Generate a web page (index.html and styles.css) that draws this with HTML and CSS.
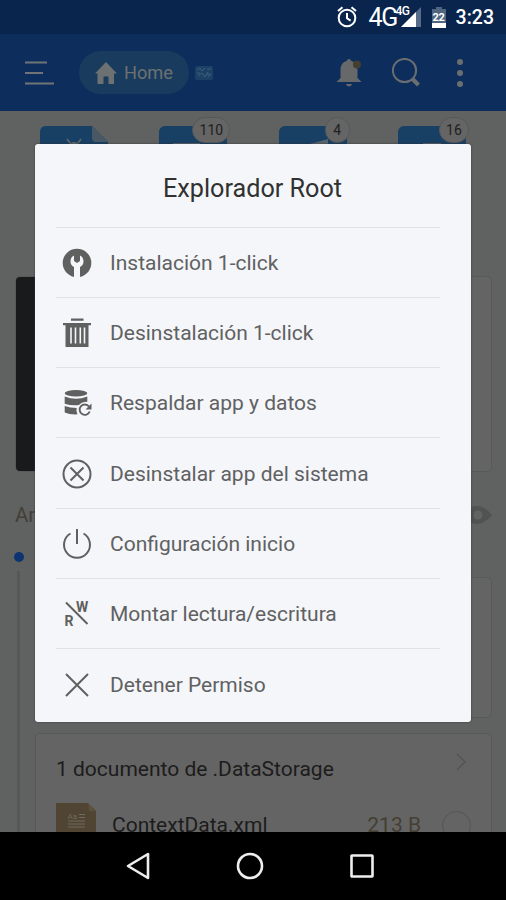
FILE: index.html
```html
<!DOCTYPE html>
<html lang="es">
<head>
<meta charset="utf-8">
<title>Explorador Root</title>
<link rel="stylesheet" href="styles.css">
</head>
<body>
<div class="screen">
  <div class="status">
    <svg class="alarm" width="20" height="22" viewBox="0 0 20 22" fill="none" stroke="#fff" stroke-width="2"><circle cx="10" cy="12" r="8.3"/><path d="M10 7v5.3l3.6 2.3M1 5l4.5-3.8M19 5l-4.500-3.800"/></svg>
    <span class="net">4G</span>
    <span class="signal"><span class="net-small">4G</span><svg width="20" height="20" viewBox="0 0 20 20"><path d="M20 0v20H0z" fill="#566b88"/><path d="M15 5v15H0z" fill="#fff"/></svg></span>
    <span class="battery"><svg width="14" height="21" viewBox="0 0 14 21"><path d="M4 0h6v2h4v19H0V2h4z" fill="#50657f"/><path d="M0 16h14v5H0z" fill="#fff"/></svg><b>22</b></span>
    <span class="clock">3:23</span>
  </div>
  <header class="toolbar">
    <svg class="menu" width="30" height="24" viewBox="0 0 30 24" stroke="#707477" stroke-width="2"><path d="M0 1.500h22M0 12h18M0 22.500h29"/></svg>
    <div class="home">
      <svg width="22" height="22" viewBox="0 0 22 22" fill="#6e7172"><path d="M11 0L22 11.500h-3V22h-5.500v-7.500h-5V22H2.500V11.500H0z"/></svg>
      <span>Home</span>
    </div>
    <svg class="chip" width="18" height="14" viewBox="0 0 18 14"><rect width="18" height="14" rx="2" fill="#1b4166"/><path d="M2 4l3-2 2 3 3-3M3 10l4-3 3 4 3-5M12 3h4M13 11l3-3M2 7h3M12 8h3" stroke="#3f6075" fill="none"/></svg>
    <svg class="bell" width="26" height="28" viewBox="0 0 26 28"><path d="M13 0c1.500 0 2 1 2.200 2C20 3.200 21.500 7 21.500 11v8l4 4H.5l4-4v-8c0-4 1.500-7.800 6.300-9C11 1 11.500 0 13 0zM10 25h6c-.3 3.200-5.700 3.200-6 0z" fill="#666869"/><circle cx="21" cy="5.500" r="4" fill="#453f2f"/></svg>
    <svg class="search" width="28" height="29" viewBox="0 0 28 29" fill="none" stroke="#6b6e70"><circle cx="12.500" cy="12.500" r="11.600" stroke-width="2"/><path d="M20.500 21l6 6" stroke-width="4"/></svg>
    <svg class="more" width="6" height="28" viewBox="0 0 6 28" fill="#6b6e70"><circle cx="3" cy="3" r="3"/><circle cx="3" cy="14" r="3"/><circle cx="3" cy="25" r="3"/></svg>
  </header>
  <main class="content">
    <div class="tiles">
      <div class="tile"><svg width="68" height="40" viewBox="0 0 68 40"><path d="M6 0h46l16 16v24H0V6q0-6 6-6z" fill="#183f64"/><path d="M52 0l16 16H56q-4 0-4-4z" fill="#485965"/><path d="M27 13l3 4M41 13l-3 4" stroke="#626a6d" stroke-width="1.500"/><path d="M27 20q7-8 14 0z" fill="#626a6d"/></svg></div>
      <div class="tile"><svg width="68" height="40" viewBox="0 0 68 40"><rect width="68" height="45" rx="6" fill="#183f64"/><path d="M14 17h27v5H14z" fill="#58656c"/></svg><span class="badge wide">110</span></div>
      <div class="tile"><svg width="68" height="40" viewBox="0 0 68 40"><rect width="68" height="45" rx="6" fill="#183f64"/><path d="M31 18l18-5v8H31z" fill="#58656c"/></svg><span class="badge">4</span></div>
      <div class="tile"><svg width="68" height="40" viewBox="0 0 68 40"><rect width="68" height="45" rx="6" fill="#183f64"/><path d="M25 17h18v5H25z" fill="#58656c"/></svg><span class="badge mid">16</span></div>
    </div>
    <div class="card banner"><div class="banner-art"></div></div>
    <div class="section"><span>Archivos recientes</span>
      <svg width="30" height="18" viewBox="0 0 30 18"><path d="M0 9Q15-9 30 9 15 27 0 9z" fill="#515353"/><circle cx="16" cy="9" r="4.500" fill="#606362"/></svg>
    </div>
    <div class="timeline">
      <div class="rail"><i class="dot"></i><i class="line"></i></div>
      <div class="entries">
        <div class="card entry"></div>
        <div class="card doc">
          <div class="doc-head"><span>1 documento de .DataStorage</span><svg width="10" height="18" viewBox="0 0 10 18" fill="none" stroke="#515454" stroke-width="1.400"><path d="M1 1l8 8-8 8"/></svg></div>
          <div class="doc-row">
            <svg width="40" height="44" viewBox="0 0 40 44"><path d="M0 0h32l8 8v36H0z" fill="#4f4532"/><path d="M32 0l8 8h-7z" fill="#5d523b"/><path d="M23 11.500h6M23 14.500h6M12 18h17M12 21h17M12 24h17" stroke="#716a5e" stroke-width="1"/><text x="11.500" y="16" class="aa">Aa</text><text x="13" y="34" class="aa">XML</text></svg>
            <span class="file">ContextData.xml</span><span class="size">213 B</span><i class="radio"></i>
          </div>
        </div>
      </div>
    </div>
  </main>
  <nav class="nav">
    <svg width="24" height="28" viewBox="0 0 24 28"><path d="M22 2v24L2 14z"/></svg>
    <svg width="28" height="28" viewBox="0 0 28 28"><circle cx="14" cy="14" r="12"/></svg>
    <svg width="24" height="24" viewBox="0 0 24 24"><rect x="1.500" y="1.500" width="21" height="21" rx=".5"/></svg>
  </nav>
  <section class="dialog">
    <h1>Explorador Root</h1>
    <ul>
      <li><svg viewBox="0 0 30 30"><circle cx="15" cy="15" r="14.300" fill="#5f6060"/><path d="M12 7.500v5.500l3 2 3-2V7.500q3.500 1.500 3.500 6 0 3.500-3.500 5.500V30h-6V19q-3.500-2-3.500-5.500 0-4.500 3.500-6z" fill="#f5f6f9"/></svg><span>Instalación 1-click</span></li>
      <li><svg viewBox="0 0 30 30"><path d="M9 .5h12.500v2.200H9zM1 5h28v2.200h-2.500V29h-23V7.200H1z" fill="#5f6060"/><path d="M9 9.500v16M13.500 9.500v16M18.300 9.500v16M22.500 9.500v16" stroke="#f5f6f9" stroke-width="1.600"/></svg><span>Desinstalación 1-click</span></li>
      <li><svg viewBox="0 0 30 30"><g fill="#5f6060"><ellipse cx="14" cy="5.300" rx="11.300" ry="3.200"/><path d="M2.700 8.500q11.300 4.500 22.600 0v5.200q-5.300 0-8.300 3.300-8 .8-14.300-1.300zM2.700 18q5.500 2 12 2-.9 3 .8 6.300-7.300.5-12.800-1.800z"/></g><path d="M27 18.500a5.200 5.200 0 1 0 .7 5" fill="none" stroke="#5f6060" stroke-width="1.900"/><path d="M29.500 15.500v6h-6z" fill="#5f6060"/></svg><span>Respaldar app y datos</span></li>
      <li><svg viewBox="0 0 30 30" class="stroke"><circle cx="15" cy="15" r="13.500"/><path d="M8.500 8.500l13 13M21.500 8.500l-13 13"/></svg><span>Desinstalar app del sistema</span></li>
      <li><svg viewBox="0 0 30 30" class="stroke"><path d="M15 0v15M8.500 4.500a13 13 0 1 0 13 0"/></svg><span>Configuración inicio</span></li>
      <li><svg viewBox="0 0 30 30" class="stroke"><path d="M4 3.500l21.500 21.500"/><text x="14" y="12.500">W</text><text x="2.500" y="26.500">R</text></svg><span>Montar lectura/escritura</span></li>
      <li><svg viewBox="0 0 30 30" class="stroke"><path d="M4 4l22 22M26 4L4 26"/></svg><span>Detener Permiso</span></li>
    </ul>
  </section>
</div>
</body>
</html>
```
FILE: styles.css
```css
* { box-sizing: border-box; }
body { margin: 0; font-family: Roboto, sans-serif; }
svg { display: block; flex: none; }
.screen { position: relative; width: 506px; height: 900px; display: flex; flex-direction: column; overflow: hidden; background: #5f6261; }
.status { height: 34px; flex: none; background: #09254e; color: #fff; display: flex; align-items: center; justify-content: flex-end; padding-right: 12px; }
.alarm { margin-right: 12px; }
.net { font-size: 25px; letter-spacing: -1.5px; width: 27px; white-space: nowrap; }
.signal { position: relative; margin: 0 11px 0 5px; }
.net-small { position: absolute; left: -5px; top: -2px; font-size: 12px; font-weight: 500; line-height: 12px; letter-spacing: -0.8px; }
.battery { position: relative; margin-right: 10px; }
.battery b { position: absolute; left: 1px; top: 4px; font-size: 11px; line-height: 13px; letter-spacing: -0.5px; }
.clock { font-size: 19.5px; font-weight: 500; }
.toolbar { height: 77px; flex: none; background: #0d2e5c; display: flex; align-items: center; padding: 0 43px 0 25px; }
.menu { margin-right: 24px; }
.home { width: 110px; height: 43px; border-radius: 22px; background: #183b5e; color: #6e7172; display: flex; align-items: center; padding-left: 16px; gap: 7px; font-size: 18.2px; }
.chip { margin-left: 6px; }
.bell { margin-left: auto; }
.search { margin-left: 30px; }
.more { margin-left: 37px; }
.content { flex: 1; min-height: 0; overflow: hidden; }
.tiles { height: 165px; display: flex; justify-content: space-between; padding: 15px 40px 0; }
.tile { position: relative; width: 68px; }
.badge { position: absolute; right: -3px; top: -9px; width: 25px; height: 26px; border-radius: 13px; border: 1px solid #565757; background: #656565; color: #202020; font-size: 14px; line-height: 25px; text-align: center; }
.wide { width: 38px; }
.mid { width: 30px; }
.card { background: #646464; border: 1px solid #575a59; border-radius: 5px; }
.banner { height: 196px; margin: 0 14px 0 15px; }
.banner-art { width: 400px; height: 194px; border-radius: 4px; background: #181a1c; }
.section { height: 86px; display: flex; align-items: center; justify-content: space-between; padding: 0 14px 0 15px; color: #443e37; font-size: 20.5px; }
.timeline { display: flex; padding: 0 14px; margin-top: -6px; }
.rail { width: 21px; display: flex; flex-direction: column; }
.dot { width: 10px; height: 10px; border-radius: 50%; background: #0d3470; }
.line { width: 3px; flex: 1; margin: 9px 0 0 3px; background: #565858; }
.entries { flex: 1; padding-top: 25px; }
.entry { height: 141px; margin-bottom: 15px; }
.doc { height: 130px; padding: 0 20px 0 20px; }
.doc-head { display: flex; justify-content: space-between; align-items: center; height: 69px; padding-right: 5px; color: #1c1c1c; font-size: 21px; }
.doc-head svg { margin-top: -14px; }
.doc-row { display: flex; align-items: center; height: 44px; color: #1c1c1c; font-size: 21px; }
.file { margin-left: 16px; }
.size { margin-left: auto; color: #453f32; }
.radio { width: 29px; height: 29px; border: 1.5px solid #535555; border-radius: 50%; margin-left: 21px; }
.aa { font-size: 8px; fill: #716a5e; }
.nav { height: 68px; flex: none; background: #000; display: flex; align-items: center; justify-content: center; gap: 86px; padding: 0 6px 0 0; }
.nav svg { fill: none; stroke: #eee; stroke-width: 2.6; stroke-linejoin: round; }
.dialog { position: absolute; left: 35px; top: 144px; width: 436px; height: 578px; border-radius: 3px; background: #f5f6f9; box-shadow: 0 0 2px #333; padding: 0 31px 0 21px; overflow: hidden; }
.dialog h1 { margin: 0; height: 82.5px; padding: 6px 0 0 9px; display: flex; align-items: center; justify-content: center; font-size: 25.2px; font-weight: 400; color: #303131; }
.dialog ul { list-style: none; margin: 0; padding: 0; }
.dialog li { height: 70.33px; border-top: 1.5px solid #e1e2e4; display: flex; align-items: center; padding: 1px 0 0 6px; gap: 18px; font-size: 21px; color: #606162; }
.dialog li svg { width: 30px; height: 30px; }
.stroke { fill: none; stroke: #5f6060; stroke-width: 2; }
.stroke text { font-size: 14px; font-weight: 700; fill: #5f6060; stroke: none; }
```
